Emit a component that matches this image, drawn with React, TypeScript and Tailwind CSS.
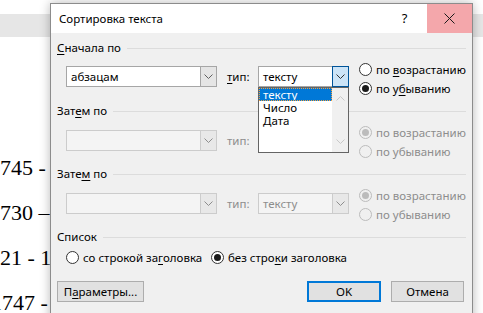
import React from "react";

const ui = { fontFamily: '"Noto Sans", "Open Sans", sans-serif' };
const serif = { fontFamily: '"Liberation Serif", "Times New Roman", serif' };

function Chevron({ color = "#606060" }: { color?: string }) {
    return (
        <svg width="9" height="5" viewBox="0 0 9 5">
            <path d="M0.5 0.5 L4.5 4.5 L8.5 0.5" stroke={color} strokeWidth="1" fill="none" />
        </svg>
    );
}

function ChevronUp({ color = "#c8c8c8" }: { color?: string }) {
    return (
        <svg width="9" height="5" viewBox="0 0 9 5">
            <path d="M0.5 4.5 L4.5 0.5 L8.5 4.5" stroke={color} strokeWidth="1" fill="none" />
        </svg>
    );
}

type ComboProps = { width: string; value?: string; disabled?: boolean; active?: boolean };

function Combo({ width, value, disabled, active }: ComboProps) {
    return (
        <div
            className={`flex h-[21px] ${width} border ${
                disabled ? "border-[#cccccc] bg-[#f4f4f4]" : "border-[#a6a6a6] bg-white"
            }`}
        >
            <div
                className={`flex-1 flex items-center pl-[4px] text-[11.5px] leading-none whitespace-nowrap ${
                    disabled ? "text-[#8d8d8d]" : "text-black"
                }`}
            >
                {value}
            </div>
            {active ? (
                <div className="w-[17px] -my-px -mr-px flex items-center justify-center bg-[#cce4f7] border border-[#005499]">
                    <Chevron color="#333333" />
                </div>
            ) : (
                <div
                    className={`w-[16px] flex items-center justify-center border-l ${
                        disabled ? "border-[#cccccc] bg-[#e8e8e8]" : "border-[#a6a6a6] bg-[#e5e5e5]"
                    }`}
                >
                    <Chevron color={disabled ? "#8d8d8d" : "#606060"} />
                </div>
            )}
        </div>
    );
}

function Radio({ checked, disabled, children }: { checked?: boolean; disabled?: boolean; children: React.ReactNode }) {
    return (
        <div className="flex h-[19px] items-center gap-[4px] whitespace-nowrap">
            <span
                className={`flex h-[13px] w-[13px] shrink-0 items-center justify-center rounded-full border ${
                    disabled ? "border-[#bcbcbc] bg-[#f0f0f0]" : "border-[#333333] bg-white"
                }`}
            >
                {checked && (
                    <span className={`h-[7px] w-[7px] rounded-full ${disabled ? "bg-[#bcbcbc]" : "bg-[#1a1a1a]"}`} />
                )}
            </span>
            <span className={`text-[11.5px] leading-none ${disabled ? "text-[#8d8d8d]" : "text-black"}`}>{children}</span>
        </div>
    );
}

function Header({ children }: { children: React.ReactNode }) {
    return (
        <div className="flex h-[16px] items-center">
            <span className="text-[11.5px] leading-none text-black whitespace-nowrap">{children}</span>
            <div className="ml-[6px] h-px flex-1 bg-[#dcdcdc]" />
        </div>
    );
}

function SortRow({ first, top, value }: { first?: boolean; top: string; value?: string }) {
    return (
        <div className="flex h-[47px] items-start">
            <div className={`pl-[9px] ${top}`}>
                <Combo width="w-[151px]" value={first ? "абзацам" : ""} disabled={!first} />
            </div>
            <div className={`ml-[10px] w-[31px] ${top}`}>
                <div
                    className={`flex h-[21px] items-center text-[11.5px] leading-none ${
                        first ? "text-black" : "text-[#8d8d8d]"
                    }`}
                >
                    {first ? (
                        <>
                            <span className="underline underline-offset-2">т</span>ип:
                        </>
                    ) : (
                        "тип:"
                    )}
                </div>
            </div>
            <div className={top}>
                {first ? (
                    <Combo width="w-[91px]" value="тексту" active />
                ) : value ? (
                    <Combo width="w-[91px]" value={value} disabled />
                ) : (
                    <div className="w-[91px]" />
                )}
            </div>
            <div className="ml-[10px] flex flex-col pt-[4px]">
                {first ? (
                    <>
                        <Radio>
                            по <span className="underline underline-offset-2">в</span>озрастанию
                        </Radio>
                        <Radio checked>
                            по у<span className="underline underline-offset-2">б</span>ыванию
                        </Radio>
                    </>
                ) : (
                    <>
                        <Radio checked disabled>
                            по возрастанию
                        </Radio>
                        <Radio disabled>по убыванию</Radio>
                    </>
                )}
            </div>
        </div>
    );
}

function Button({ width, children, primary }: { width: string; children: React.ReactNode; primary?: boolean }) {
    return (
        <div
            className={`flex h-[21px] ${width} items-center justify-center bg-[#e1e1e1] text-[11.5px] leading-none text-black whitespace-nowrap ${
                primary ? "border-2 border-[#0078d7]" : "border border-[#adadad]"
            }`}
        >
            {children}
        </div>
    );
}

export default function App() {
    return (
        <div className="relative h-[313px] w-[483px] overflow-hidden bg-white">
            {/* document behind the dialog */}
            <div className="h-[14px]" />
            <div className="h-[23px] bg-[#e6e6e6]" />
            <div className="mt-[108px] text-[22px] leading-[45px] text-black" style={serif}>
                <div className="ml-[-11px] whitespace-pre">1745 -</div>
                <div className="ml-[-11px] whitespace-pre">1730 –</div>
                <div className="ml-[-22px] whitespace-pre">1721 - 1</div>
                <div className="ml-[-9px] whitespace-pre">1747 -</div>
            </div>

            {/* dialog window */}
            <div
                className="absolute left-[50px] top-[3px] h-[330px] w-[423px] border border-[#8c8c8c] bg-[#f0f0f0] shadow-[0_0_10px_rgba(0,0,0,0.28)]"
                style={ui}
            >
                <div className="flex h-[29px] items-stretch bg-white">
                    <div className="flex flex-1 items-center pl-[8px] text-[11.5px] leading-none text-black">
                        Сортировка текста
                    </div>
                    <div className="flex w-[45px] items-center justify-center text-[13px] text-black">?</div>
                    <div className="flex w-[45px] items-center justify-center bg-[#f4a7ab]">
                        <svg width="11" height="11" viewBox="0 0 11 11">
                            <path d="M0.5 0.5 L10.5 10.5 M10.5 0.5 L0.5 10.5" stroke="#1a1a1a" strokeWidth="1" />
                        </svg>
                    </div>
                </div>

                <div className="flex flex-col px-[6px] pt-[7px]">
                    <Header>
                        <span className="underline underline-offset-2">С</span>начала по
                    </Header>
                    <SortRow first top="pt-[10px]" />
                    <Header>
                        Зат<span className="underline underline-offset-2">е</span>м по
                    </Header>
                    <SortRow top="pt-[11px]" />
                    <Header>
                        Зате<span className="underline underline-offset-2">м</span> по
                    </Header>
                    <SortRow top="pt-[11px]" value="тексту" />
                    <Header>Список</Header>
                    <div className="mt-[3px] flex pl-[9px]">
                        <div className="w-[145px]">
                            <Radio>
                                со строкой за<span className="underline underline-offset-2">г</span>оловка
                            </Radio>
                        </div>
                        <Radio checked>
                            без стро<span className="underline underline-offset-2">к</span>и заголовка
                        </Radio>
                    </div>
                    <div className="mt-[14px] flex items-center pr-[2px]">
                        <Button width="w-[87px]">
                            П<span className="underline underline-offset-2">а</span>раметры...
                        </Button>
                        <div className="flex-1" />
                        <Button width="w-[74px]" primary>
                            OK
                        </Button>
                        <div className="w-[10px]" />
                        <Button width="w-[73px]">Отмена</Button>
                    </div>
                </div>

                {/* open drop-down list */}
                <div className="absolute left-[207px] top-[83px] flex h-[66px] w-[91px] border border-[#646464] bg-white">
                    <div className="flex flex-1 flex-col">
                        <div className="flex h-[13px] items-center overflow-hidden border border-dotted border-[#f0a040] bg-[#0078d7] pl-[3px] text-[11.5px] leading-[12px] text-white">
                            тексту
                        </div>
                        <div className="flex h-[13px] items-center overflow-hidden pl-[4px] text-[11.5px] leading-[13px] text-black">
                            Число
                        </div>
                        <div className="flex h-[13px] items-center overflow-hidden pl-[4px] text-[11.5px] leading-[13px] text-black">
                            Дата
                        </div>
                    </div>
                    <div className="flex w-[16px] flex-col items-center justify-between bg-[#f0f0f0] py-[8px]">
                        <ChevronUp />
                        <Chevron color="#c8c8c8" />
                    </div>
                </div>
            </div>
        </div>
    );
}
